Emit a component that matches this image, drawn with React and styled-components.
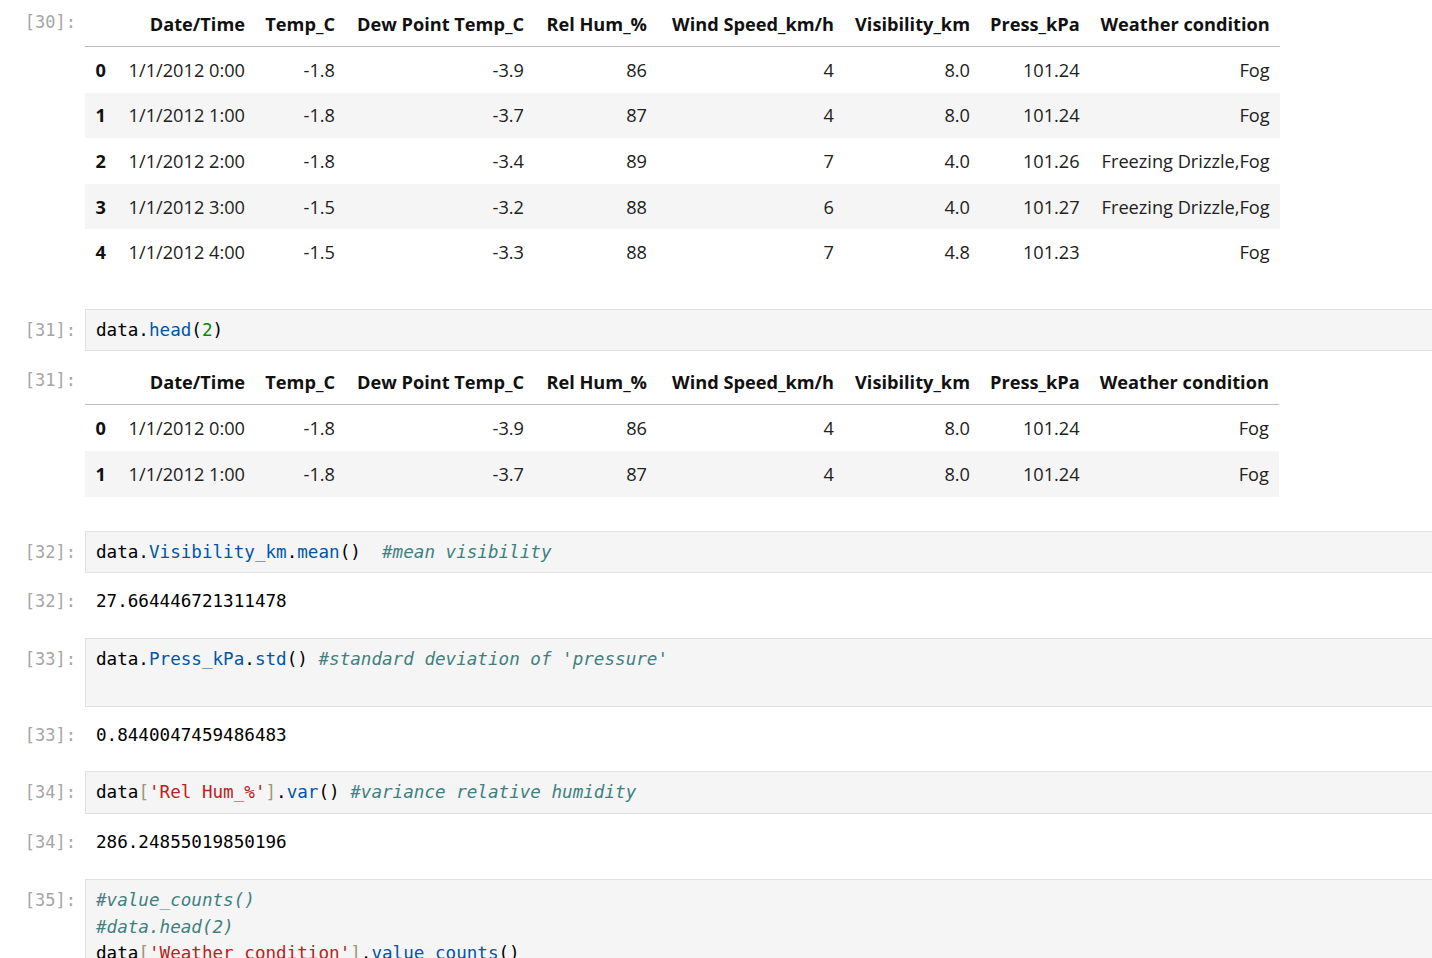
import React from "react";
import styled, { createGlobalStyle } from "styled-components";

const Global = createGlobalStyle`
  html, body { margin: 0; padding: 0; background: #ffffff; overflow: hidden; }
  body { font-family: "Open Sans", "Noto Sans", sans-serif; color: #212121; }
`;

const Notebook = styled.div`
  width: 1480px;
  display: flex;
  flex-direction: column;
  padding-top: 2px;
`;

const Row = styled.div`
  display: flex;
  align-items: flex-start;
  margin-top: ${(p) => p.$gap || 0}px;
`;

const Prompt = styled.div`
  flex: 0 0 85px;
  box-sizing: border-box;
  padding-right: 9px;
  padding-top: ${(p) => p.$top || 0}px;
  text-align: right;
  font-family: "DejaVu Sans Mono", "Liberation Mono", monospace;
  font-size: 17px;
  line-height: 26.5px;
  color: #a6a6a6;
  white-space: pre;
`;

const CodeBox = styled.div`
  flex: 1;
  box-sizing: border-box;
  background: #f5f5f5;
  border: 1px solid #e0e0e0;
  padding: 7px 10px;
`;

const Line = styled.div`
  font-family: "DejaVu Sans Mono", "Liberation Mono", monospace;
  font-size: 17.6px;
  line-height: 26.5px;
  color: #000000;
  white-space: pre;
  height: 26.5px;
`;

const Tok = styled.span`
  color: ${(p) =>
    p.$k === "prop" ? "#0055aa" :
    p.$k === "num" ? "#008800" :
    p.$k === "str" ? "#ba2121" :
    p.$k === "br" ? "#999977" :
    p.$k === "com" ? "#408080" : "#000000"};
  font-style: ${(p) => (p.$k === "com" ? "italic" : "normal")};
`;

const TextOut = styled.div`
  flex: 1;
  padding-left: 11px;
  font-family: "DejaVu Sans Mono", "Liberation Mono", monospace;
  font-size: 17.6px;
  line-height: 26.5px;
  color: #000000;
  white-space: pre;
`;

const TableWrap = styled.div`
  flex: 1;
`;

const Table = styled.table`
  border-collapse: collapse;
  border-spacing: 0;
  table-layout: fixed;
  font-size: 18.2px;
  color: #212121;
`;

const Th = styled.th`
  font-weight: 700;
  text-align: right;
  padding: 0 10px;
  height: 44px;
  white-space: nowrap;
  color: #111111;
  border-bottom: 1px solid #bdbdbd;
`;

const BodyRow = styled.tr`
  background: ${(p) => (p.$odd ? "#f5f5f5" : "transparent")};
`;

const IndexCell = styled.th`
  font-weight: 700;
  text-align: right;
  padding: 0 10px;
  height: 45.6px;
  color: #111111;
  white-space: nowrap;
`;

const Td = styled.td`
  text-align: right;
  padding: 0 10px;
  height: 45.6px;
  white-space: nowrap;
`;

const columns = [
  "Date/Time",
  "Temp_C",
  "Dew Point Temp_C",
  "Rel Hum_%",
  "Wind Speed_km/h",
  "Visibility_km",
  "Press_kPa",
  "Weather condition",
];

const rows = [
  ["1/1/2012 0:00", "-1.8", "-3.9", "86", "4", "8.0", "101.24", "Fog"],
  ["1/1/2012 1:00", "-1.8", "-3.7", "87", "4", "8.0", "101.24", "Fog"],
  ["1/1/2012 2:00", "-1.8", "-3.4", "89", "7", "4.0", "101.26", "Freezing Drizzle,Fog"],
  ["1/1/2012 3:00", "-1.5", "-3.2", "88", "6", "4.0", "101.27", "Freezing Drizzle,Fog"],
  ["1/1/2012 4:00", "-1.5", "-3.3", "88", "7", "4.8", "101.23", "Fog"],
];

function DataFrame({ data, lastWidth }) {
  const widths = [31, 139, 90, 189, 123, 187, 136, 108, lastWidth];
  return (
    <Table>
      <colgroup>
        {widths.map((w, i) => (
          <col key={i} style={{ width: w }} />
        ))}
      </colgroup>
      <thead>
        <tr>
          <Th />
          {columns.map((c) => (
            <Th key={c}>{c}</Th>
          ))}
        </tr>
      </thead>
      <tbody>
        {data.map((r, i) => (
          <BodyRow key={i} $odd={i % 2 === 1}>
            <IndexCell>{i}</IndexCell>
            {r.map((v, j) => (
              <Td key={j}>{v}</Td>
            ))}
          </BodyRow>
        ))}
      </tbody>
    </Table>
  );
}

export default function App() {
  return (
    <>
      <Global />
      <Notebook>
        <Row>
          <Prompt $top={7}>[30]:</Prompt>
          <TableWrap>
            <DataFrame data={rows} lastWidth={190} />
          </TableWrap>
        </Row>

        <Row $gap={34}>
          <Prompt $top={8}>[31]:</Prompt>
          <CodeBox>
            <Line>
              data.<Tok $k="prop">head</Tok>(<Tok $k="num">2</Tok>)
            </Line>
          </CodeBox>
        </Row>

        <Row $gap={9}>
          <Prompt $top={7}>[31]:</Prompt>
          <TableWrap>
            <DataFrame data={rows.slice(0, 2)} lastWidth={188} />
          </TableWrap>
        </Row>

        <Row $gap={34}>
          <Prompt $top={8}>[32]:</Prompt>
          <CodeBox>
            <Line>
              data.<Tok $k="prop">Visibility_km</Tok>.<Tok $k="prop">mean</Tok>(){"  "}
              <Tok $k="com">#mean visibility</Tok>
            </Line>
          </CodeBox>
        </Row>

        <Row $gap={15}>
          <Prompt>[32]:</Prompt>
          <TextOut>27.664446721311478</TextOut>
        </Row>

        <Row $gap={23}>
          <Prompt $top={8}>[33]:</Prompt>
          <CodeBox>
            <Line>
              data.<Tok $k="prop">Press_kPa</Tok>.<Tok $k="prop">std</Tok>(){" "}
              <Tok $k="com">#standard deviation of 'pressure'</Tok>
            </Line>
            <Line> </Line>
          </CodeBox>
        </Row>

        <Row $gap={15}>
          <Prompt>[33]:</Prompt>
          <TextOut>0.8440047459486483</TextOut>
        </Row>

        <Row $gap={23}>
          <Prompt $top={8}>[34]:</Prompt>
          <CodeBox>
            <Line>
              data<Tok $k="br">[</Tok>
              <Tok $k="str">'Rel Hum_%'</Tok>
              <Tok $k="br">]</Tok>.<Tok $k="prop">var</Tok>(){" "}
              <Tok $k="com">#variance relative humidity</Tok>
            </Line>
          </CodeBox>
        </Row>

        <Row $gap={15}>
          <Prompt>[34]:</Prompt>
          <TextOut>286.24855019850196</TextOut>
        </Row>

        <Row $gap={24}>
          <Prompt $top={8}>[35]:</Prompt>
          <CodeBox>
            <Line>
              <Tok $k="com">#value_counts()</Tok>
            </Line>
            <Line>
              <Tok $k="com">#data.head(2)</Tok>
            </Line>
            <Line>
              data<Tok $k="br">[</Tok>
              <Tok $k="str">'Weather condition'</Tok>
              <Tok $k="br">]</Tok>.<Tok $k="prop">value_counts</Tok>()
            </Line>
          </CodeBox>
        </Row>
      </Notebook>
    </>
  );
}
